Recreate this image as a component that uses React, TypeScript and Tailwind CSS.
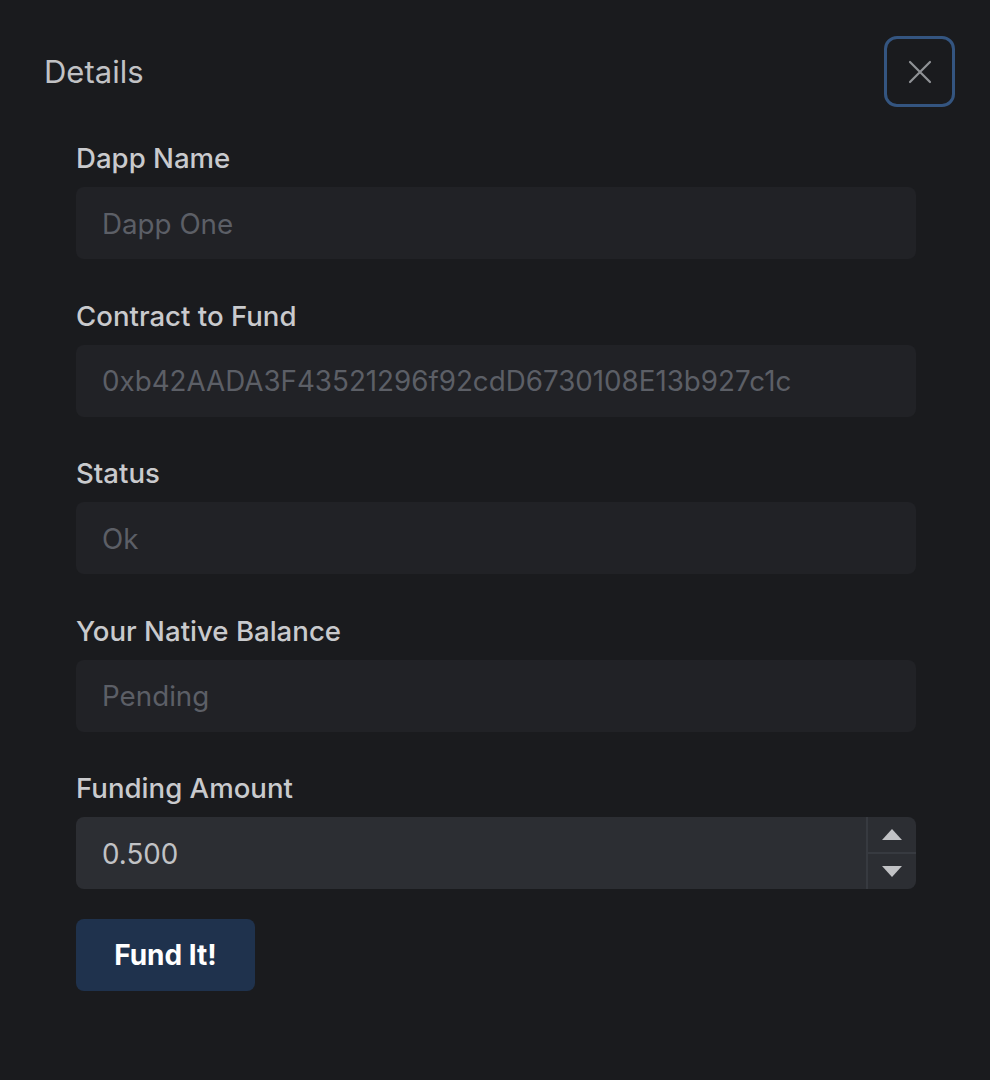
const fields = [
  { label: 'Dapp Name', value: 'Dapp One' },
  { label: 'Contract to Fund', value: '0xb42AADA3F43521296f92cdD6730108E13b927c1c' },
  { label: 'Status', value: 'Ok' },
  { label: 'Your Native Balance', value: 'Pending' },
]

function Field({ label, value }: { label: string; value: string }) {
  return (
    <div className="flex flex-col">
      <span className="text-[27.6px] leading-[44px] font-medium text-[#c9cacd]">{label}</span>
      <div className="mt-[7px] h-[72px] rounded-[8px] bg-[#212226] px-[26px] pt-[3px] flex items-center text-[27.75px] text-[#5c5f66]">
        {value}
      </div>
    </div>
  )
}

export default function App() {
  return (
    <div
      className="w-[990px] h-[1080px] bg-[#1a1b1e] pt-[36px] pl-[44px] pr-[35px]"
      style={{ fontFamily: 'Inter, "Noto Sans", sans-serif' }}
    >
      <div className="flex items-center justify-between">
        <h2 className="text-[31px] text-[#c1c2c5] font-normal pt-[2px]">Details</h2>
        <button className="w-[71px] h-[71px] rounded-[13px] border-[3px] border-[#345580] flex items-center justify-center">
          <svg width="24" height="24" viewBox="0 0 24 24" fill="none" stroke="#909296" strokeWidth="2.2" strokeLinecap="round">
            <path d="M2 2 L22 22 M22 2 L2 22" />
          </svg>
        </button>
      </div>
      <div className="ml-[32px] w-[840px] mt-[29px] flex flex-col gap-[34.5px]">
        {fields.map((f) => (
          <Field key={f.label} {...f} />
        ))}
        <div className="flex flex-col">
          <span className="text-[27.6px] leading-[44px] font-medium text-[#c9cacd]">Funding Amount</span>
          <div className="mt-[7px] h-[72px] rounded-[8px] bg-[#2c2e33] flex">
            <div className="flex-1 px-[26px] pt-[3px] flex items-center text-[27.75px] text-[#c1c2c5]">0.500</div>
            <div className="w-[50px] border-l-2 border-[#373a40] flex flex-col">
              <div className="flex-1 flex items-center justify-center border-b-2 border-[#373a40]">
                <svg width="20" height="11" viewBox="0 0 20 11"><path d="M10 0 L20 11 L0 11 Z" fill="#c1c2c5" /></svg>
              </div>
              <div className="flex-1 flex items-center justify-center">
                <svg width="20" height="11" viewBox="0 0 20 11"><path d="M0 0 L20 0 L10 11 Z" fill="#c1c2c5" /></svg>
              </div>
            </div>
          </div>
          <button className="mt-[30px] w-[179px] h-[72px] rounded-[8px] bg-[#1f324d] text-white text-[28px] font-bold">
            Fund It!
          </button>
        </div>
      </div>
    </div>
  )
}
